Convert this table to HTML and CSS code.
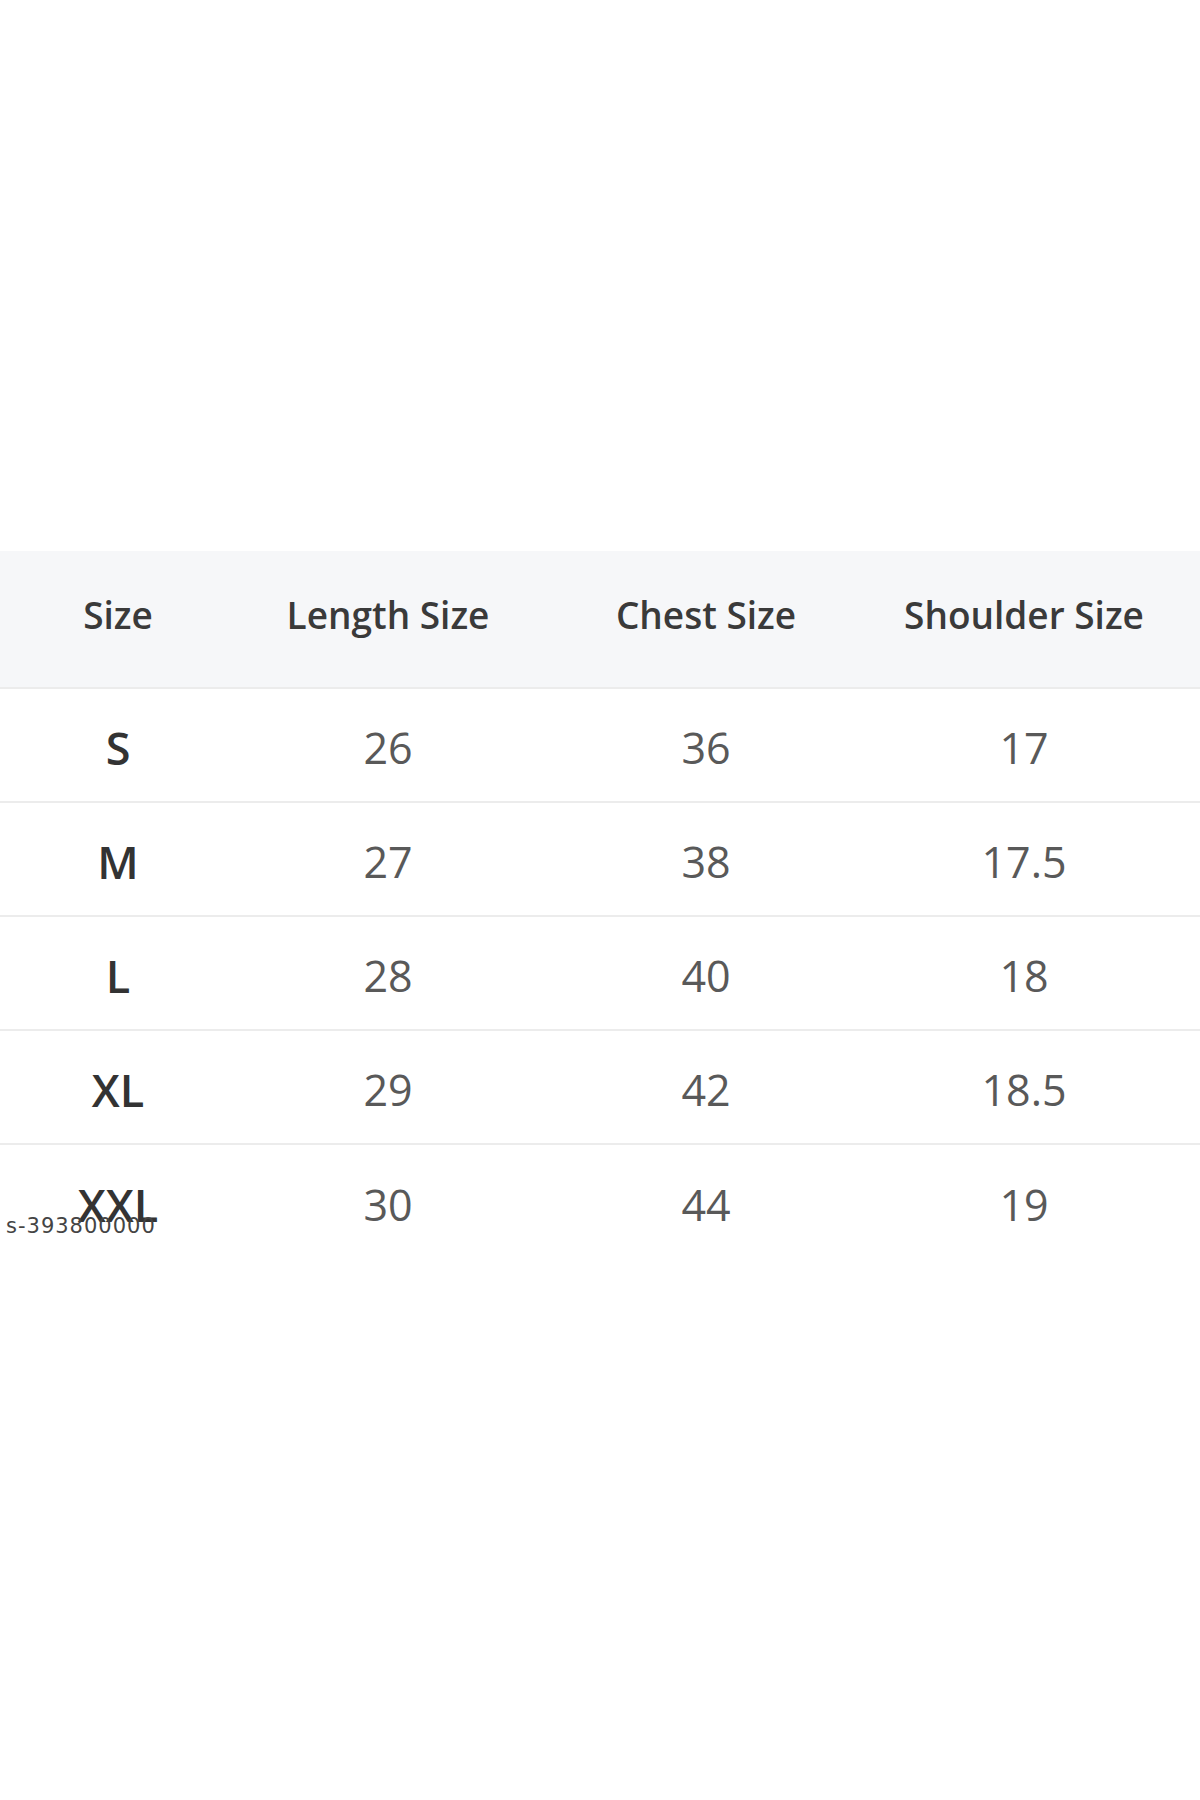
FILE: index.html
```html
<!DOCTYPE html>
<html>
<head>
<meta charset="utf-8">
<link rel="stylesheet" href="styles.css">
</head>
<body>
<div class="page">
  <div class="chart">
    <div class="row head">
      <div class="cell">Size</div>
      <div class="cell">Length Size</div>
      <div class="cell">Chest Size</div>
      <div class="cell">Shoulder Size</div>
    </div>
    <div class="row">
      <div class="cell sz">S</div><div class="cell">26</div><div class="cell">36</div><div class="cell">17</div>
    </div>
    <div class="row">
      <div class="cell sz">M</div><div class="cell">27</div><div class="cell">38</div><div class="cell">17.5</div>
    </div>
    <div class="row">
      <div class="cell sz">L</div><div class="cell">28</div><div class="cell">40</div><div class="cell">18</div>
    </div>
    <div class="row">
      <div class="cell sz">XL</div><div class="cell">29</div><div class="cell">42</div><div class="cell">18.5</div>
    </div>
    <div class="row last">
      <div class="cell sz mark-host">XXL<span class="mark">s-393800000</span></div><div class="cell">30</div><div class="cell">44</div><div class="cell">19</div>
    </div>
  </div>
</div>
</body>
</html>
```
FILE: styles.css
```css
html, body {
  margin: 0;
  padding: 0;
  background: #ffffff;
}
.page {
  width: 1200px;
  height: 1800px;
  padding-top: 551px;
  box-sizing: border-box;
  font-family: "Open Sans", "Liberation Sans", sans-serif;
}
.chart {
  display: flex;
  flex-direction: column;
}
.row {
  display: grid;
  grid-template-columns: 236px 304px 332px 304px 24px;
  height: 114px;
  box-sizing: border-box;
  border-bottom: 2px solid #ececec;
  align-items: center;
  color: #595959;
  font-size: 43px;
  font-weight: 400;
}
.row.last {
  border-bottom: none;
}
.row.head {
  height: 138px;
  background: #f6f7f9;
  color: #3a3a3a;
  font-size: 37px;
  font-weight: 600;
}
.cell {
  text-align: center;
  white-space: nowrap;
}
.head .cell {
  padding-bottom: 14px;
}
.row .cell {
  padding-top: 4px;
}
.sz {
  color: #333333;
  font-size: 45px;
  font-weight: 600;
}
.mark-host {
  position: relative;
}
.mark {
  position: absolute;
  left: 6px;
  top: 44px;
  font-size: 21px;
  font-weight: 400;
  color: #444;
  letter-spacing: 1px;
  font-family: "DejaVu Sans", sans-serif;
  text-align: left;
}
```
